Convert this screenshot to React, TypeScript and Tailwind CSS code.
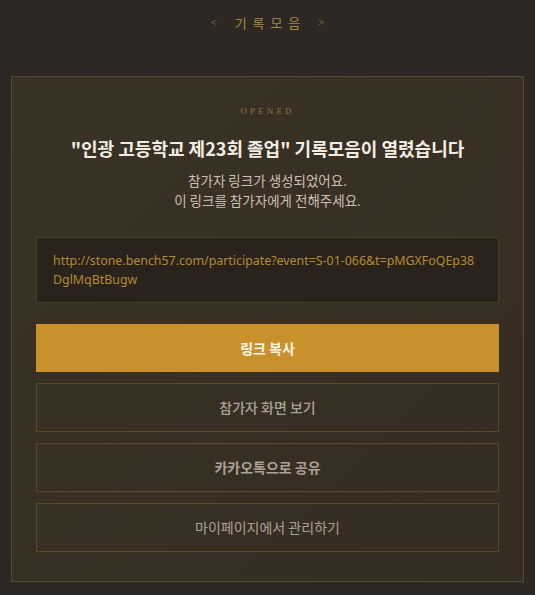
import React from 'react';

const kr = "font-['Noto_Sans_CJK_KR','Noto_Sans',sans-serif]";

export default function App() {
  const url = 'http://stone.bench57.com/participate?event=S-01-066&t=pMGXFoQEp38DglMqBtBugw';

  return (
    <div className={`min-h-[595px] w-full bg-[#2d2823] ${kr}`}>
      {/* top nav */}
      <div className="flex h-[44px] items-center justify-center gap-[12px] pt-[1px] text-[#a88a44]">
        <span className="font-['Liberation_Serif',serif] text-[11px]">&lt;</span>
        <span className="text-[13px] tracking-[0.45em] pl-[0.45em]">기록모음</span>
        <span className="font-['Liberation_Serif',serif] text-[11px]">&gt;</span>
      </div>

      <div className="mx-[11px] mt-[32px] border border-[#5a4828] bg-gradient-to-br from-[#3b3226] to-[#362d22] px-[24px] pt-[28px] pb-[29px]">
        <p className="text-center font-['Liberation_Serif',serif] text-[9px] leading-[12px] tracking-[0.35em] text-[#8c7140]">
          OPENED
        </p>
        <h1 className="mt-[19px] text-center text-[18px] font-bold leading-[24px] text-[#f2ede4]">
          "인광 고등학교 제23회 졸업" 기록모음이 열렸습니다
        </h1>
        <p className="mt-[10px] text-center text-[13.5px] leading-[20px] text-[#c9bfb2]">
          참가자 링크가 생성되었어요.
          <br />
          이 링크를 참가자에게 전해주세요.
        </p>

        <div className="mt-[27px] border border-[#4a3c24] bg-[#2a231b] px-[16px] py-[13px]">
          <p className="break-all font-['Noto_Sans',sans-serif] text-[12.4px] leading-[19px] text-[#b38a35]">
            {url}
          </p>
        </div>

        <div className="mt-[21px] flex flex-col gap-[11px]">
          <button className="flex h-[48px] items-center justify-center bg-[#c8912c] text-[14px] font-bold text-[#fbf6ec]">
            링크 복사
          </button>
          <button className="flex h-[49px] items-center justify-center border border-[#5a4828] text-[14px] font-medium text-[#aaa298]">
            참가자 화면 보기
          </button>
          <button className="flex h-[49px] items-center justify-center border border-[#5a4828] text-[14px] font-bold text-[#aaa298]">
            카카오톡으로 공유
          </button>
          <button className="flex h-[49px] items-center justify-center border border-[#5a4828] text-[14px] text-[#aaa298]">
            마이페이지에서 관리하기
          </button>
        </div>
      </div>
    </div>
  );
}
